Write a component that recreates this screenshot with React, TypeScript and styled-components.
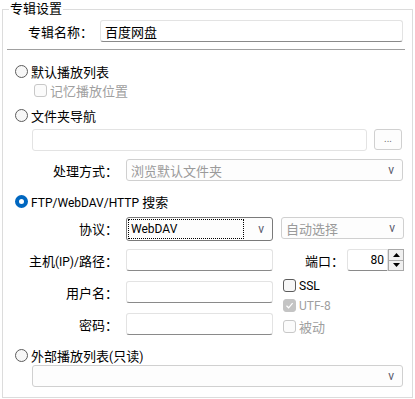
import React from 'react';
import styled, { createGlobalStyle, css } from 'styled-components';

const Global = createGlobalStyle`
  html, body { margin: 0; padding: 0; background: #fff; }
  body {
    font-family: Roboto, "Noto Sans CJK SC", sans-serif;
    font-size: 13px;
    color: #000;
  }
  * { box-sizing: border-box; }
`;

const Page = styled.div`
  width: 415px;
  height: 399px;
  padding: 0 2px;
`;

const Group = styled.fieldset`
  margin: 0;
  padding: 0 0 10px 0;
  border: 1px solid #dcdcdc;
  min-width: 0;
`;

const Legend = styled.legend`
  margin-left: 6px;
  padding: 0 1px;
  line-height: 18px;
  font-size: 13px;
`;

const Lat = styled.span`
  font-size: 12px;
`;

const NameRow = styled.div`
  display: flex;
  align-items: center;
  height: 22px;
  margin: 2px 9px 0 25px;
`;

const NameLabel = styled.span`
  width: 72px;
  flex: none;
`;

const TextBox = styled.div<{ $active?: boolean; $align?: 'left' | 'right' }>`
  height: 22px;
  display: flex;
  align-items: center;
  justify-content: ${(p) => (p.$align === 'right' ? 'flex-end' : 'flex-start')};
  padding: 0 4px;
  border: 1px solid #e3e3e3;
  border-bottom-color: ${(p) => (p.$active ? '#8a8a8a' : '#e3e3e3')};
  border-radius: 3px;
  background: #fff;
  min-width: 0;
`;

const Grow = styled(TextBox)`
  flex: 1;
`;

const Separator = styled.div`
  height: 1px;
  background: #a0a0a0;
  margin: 7px 7px 0 4px;
`;

const OptionRow = styled.div<{ $indent: number; $top: number; $h?: number }>`
  display: flex;
  align-items: center;
  height: ${(p) => p.$h ?? 20}px;
  margin-top: ${(p) => p.$top}px;
  padding-left: ${(p) => p.$indent}px;
  gap: 3px;
`;

const Radio = styled.span<{ $on?: boolean }>`
  width: 13px;
  height: 13px;
  flex: none;
  border-radius: 50%;
  ${(p) =>
    p.$on
      ? css`
          background: #fff;
          border: 4px solid #0067c0;
        `
      : css`
          background: #f7f7f7;
          border: 1px solid #5c5c5c;
        `}
`;

type CheckState = 'normal' | 'disabled' | 'checkedDisabled';

const CheckBoxBox = styled.span<{ $state: CheckState }>`
  width: 13px;
  height: 13px;
  flex: none;
  border-radius: 3px;
  display: flex;
  align-items: center;
  justify-content: center;
  ${(p) =>
    p.$state === 'normal'
      ? css`
          border: 1px solid #5c5c5c;
          background: #f7f7f7;
        `
      : p.$state === 'disabled'
      ? css`
          border: 1px solid #c8c8c8;
          background: #fbfbfb;
        `
      : css`
          border: 1px solid #c4c4c4;
          background: #c4c4c4;
        `}
`;

const OptionText = styled.span<{ $dim?: boolean }>`
  color: ${(p) => (p.$dim ? '#a0a0a0' : '#000')};
  white-space: nowrap;
`;

const CheckBox: React.FC<{ state: CheckState }> = ({ state }) => (
  <CheckBoxBox $state={state}>
    {state === 'checkedDisabled' && (
      <svg width="9" height="9" viewBox="0 0 9 9">
        <path d="M1.5 4.8 L3.6 6.8 L7.6 2.2" fill="none" stroke="#fff" strokeWidth="1.2" />
      </svg>
    )}
  </CheckBoxBox>
);

const FolderRow = styled.div`
  display: flex;
  gap: 7px;
  align-items: flex-start;
  margin: 4px 10px 0 29px;
`;

const SmallButton = styled.div`
  width: 28px;
  height: 21px;
  flex: none;
  border: 1px solid #d0d0d0;
  border-radius: 3px;
  background: #fdfdfd;
  color: #707070;
  font-size: 10px;
  display: flex;
  align-items: center;
  justify-content: center;
  padding-bottom: 2px;
`;

const LabeledRow = styled.div`
  display: grid;
  grid-template-columns: 115px 1fr;
  column-gap: 8px;
  align-items: center;
  margin: 8px 9px 0 0;
`;

const FieldLabel = styled.span`
  text-align: right;
  white-space: nowrap;
`;

const Combo = styled.div<{ $dim?: boolean; $focus?: boolean; $h?: number }>`
  height: ${(p) => p.$h ?? 22}px;
  display: flex;
  align-items: center;
  justify-content: space-between;
  padding: 0 8px 0 4px;
  border: 1px solid ${(p) => (p.$focus ? '#7a7a7a' : '#d0d0d0')};
  border-radius: 3px;
  background: #fdfdfd;
  color: ${(p) => (p.$dim ? '#9a9a9a' : '#000')};
  min-width: 0;
`;

const FocusRect = styled.span`
  flex: 1;
  align-self: stretch;
  margin: 1px 14px 1px -3px;
  padding-left: 2px;
  border: 1px dotted #000;
  display: flex;
  align-items: center;
`;

const Arrow = styled.span`
  font-size: 12px;
  color: #5a5a6a;
`;

const FtpGrid = styled.div`
  display: grid;
  grid-template-columns: 115px 147px 1fr;
  grid-template-rows: repeat(4, 22px);
  column-gap: 8px;
  row-gap: 10px;
  align-items: center;
  margin: 6px 8px 0 0;
`;

const TopCombo = styled(Combo)`
  align-self: start;
`;

const PortCell = styled.div`
  display: flex;
  justify-content: flex-end;
  align-items: center;
  gap: 3px;
`;

const Spin = styled.div`
  display: flex;
  height: 22px;
`;

const SpinInput = styled(TextBox)`
  width: 41px;
  border-radius: 3px 0 0 3px;
  border-bottom-color: #8a8a8a;
  padding-right: 3px;
`;

const SpinButtons = styled.div`
  width: 16px;
  display: flex;
  flex-direction: column;
`;

const SpinButton = styled.div`
  flex: 1;
  border: 1px solid #a8a8a8;
  background: #f0f0f0;
  display: flex;
  align-items: center;
  justify-content: center;
  & + & {
    border-top: none;
  }
`;

const CheckStack = styled.div`
  grid-row: 3 / span 2;
  grid-column: 3;
  align-self: start;
  margin-top: -6px;
  padding-left: 2px;
  display: flex;
  flex-direction: column;
`;

const StackItem = styled.div`
  height: 20.5px;
  display: flex;
  align-items: center;
  gap: 3px;
`;

const BottomCombo = styled(Combo)`
  margin: 0 9px 0 29px;
`;

const Tri: React.FC<{ up?: boolean }> = ({ up }) => (
  <svg width="7" height="4" viewBox="0 0 7 4">
    <path d={up ? 'M0 4 L3.5 0 L7 4 Z' : 'M0 0 L3.5 4 L7 0 Z'} fill="#000" />
  </svg>
);

export default function App() {
  return (
    <Page>
      <Global />
      <Group>
        <Legend>专辑设置</Legend>
        <NameRow>
          <NameLabel>专辑名称：</NameLabel>
          <Grow $active>百度网盘</Grow>
        </NameRow>
        <Separator />

        <OptionRow $indent={12} $top={11}>
          <Radio />
          <OptionText>默认播放列表</OptionText>
        </OptionRow>
        <OptionRow $indent={31} $top={0} $h={19}>
          <CheckBox state="disabled" />
          <OptionText $dim>记忆播放位置</OptionText>
        </OptionRow>

        <OptionRow $indent={12} $top={5}>
          <Radio />
          <OptionText>文件夹导航</OptionText>
        </OptionRow>
        <FolderRow>
          <Grow />
          <SmallButton>...</SmallButton>
        </FolderRow>
        <LabeledRow>
          <FieldLabel>处理方式：</FieldLabel>
          <Combo $dim>
            <span>浏览默认文件夹</span>
            <Arrow>v</Arrow>
          </Combo>
        </LabeledRow>

        <OptionRow $indent={12} $top={10}>
          <Radio $on />
          <OptionText>
            <Lat>FTP/WebDAV/HTTP</Lat> 搜索
          </OptionText>
        </OptionRow>
        <FtpGrid>
          <FieldLabel>协议：</FieldLabel>
          <TopCombo $focus $h={24}>
            <FocusRect>
              <Lat>WebDAV</Lat>
            </FocusRect>
            <Arrow>v</Arrow>
          </TopCombo>
          <TopCombo $dim>
            <span>自动选择</span>
            <Arrow>v</Arrow>
          </TopCombo>

          <FieldLabel>
            主机<Lat>(IP)/</Lat>路径：
          </FieldLabel>
          <TextBox $active />
          <PortCell>
            <span>端口：</span>
            <Spin>
              <SpinInput $align="right">
                <Lat>80</Lat>
              </SpinInput>
              <SpinButtons>
                <SpinButton>
                  <Tri up />
                </SpinButton>
                <SpinButton>
                  <Tri />
                </SpinButton>
              </SpinButtons>
            </Spin>
          </PortCell>

          <FieldLabel>用户名：</FieldLabel>
          <TextBox $active />
          <CheckStack>
            <StackItem>
              <CheckBox state="normal" />
              <OptionText>
                <Lat>SSL</Lat>
              </OptionText>
            </StackItem>
            <StackItem>
              <CheckBox state="checkedDisabled" />
              <OptionText $dim>
                <Lat>UTF-8</Lat>
              </OptionText>
            </StackItem>
            <StackItem>
              <CheckBox state="disabled" />
              <OptionText $dim>被动</OptionText>
            </StackItem>
          </CheckStack>

          <FieldLabel>密码：</FieldLabel>
          <TextBox $active />
        </FtpGrid>

        <OptionRow $indent={12} $top={10}>
          <Radio />
          <OptionText>
            外部播放列表<Lat>(</Lat>只读<Lat>)</Lat>
          </OptionText>
        </OptionRow>
        <BottomCombo>
          <span />
          <Arrow>v</Arrow>
        </BottomCombo>
      </Group>
    </Page>
  );
}
